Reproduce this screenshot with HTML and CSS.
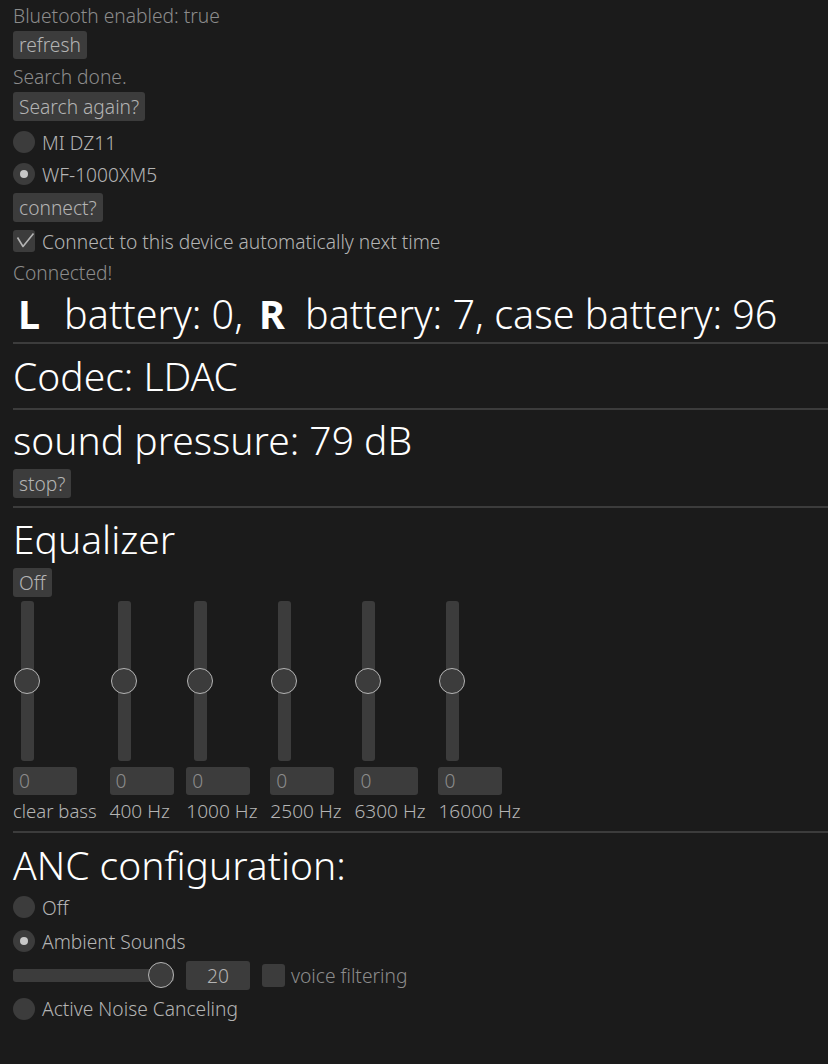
FILE: index.html
```html
<!DOCTYPE html>
<html>
<head>
<meta charset="utf-8">
<link rel="stylesheet" href="styles.css">
</head>
<body>
<div class="app">
  <div class="row h30"><span class="label">Bluetooth enabled: true</span></div>
  <button class="btn mt1 bh28">refresh</button>
  <div class="row h30 mt2"><span class="label">Search done.</span></div>
  <button class="btn mt1">Search again?</button>
  <div class="row h32 mt5"><span class="radio"></span><span class="wlabel">MI DZ11</span></div>
  <div class="row h32"><span class="radio on"><span class="dot"></span></span><span class="wlabel">WF-1000XM5</span></div>
  <button class="btn mt3">connect?</button>
  <div class="row h32 mt3">
    <span class="check"><svg width="22" height="22" viewBox="0 0 22 22"><polyline points="4.5,7.5 10,16.5 20.5,3.5" fill="none" stroke="#b4b4b4" stroke-width="1.6" stroke-linejoin="round"/></svg></span>
    <span class="wlabel">Connect to this device automatically next time</span>
  </div>
  <div class="row h30"><span class="label">Connected!</span></div>

  <div class="row h53 heading battery">
    <span class="strong sl">L</span><span class="b1">battery: 0,</span><span class="strong sr">R</span><span class="b2">battery: 7, case battery: 96</span>
  </div>
  <div class="sep mt2"></div>
  <div class="row h63 heading">Codec: LDAC</div>
  <div class="sep mt1"></div>
  <div class="row h59 heading">sound pressure: 79 dB</div>
  <button class="btn">stop?</button>
  <div class="sep mt8"></div>
  <div class="row h60 heading">Equalizer</div>
  <button class="btn">Off</button>

  <div class="eq">
    <div class="band">
      <div class="vslider"><div class="vtrack"></div><div class="knob vknob"></div></div>
      <div class="numbox">0</div>
      <div class="band-label">clear bass</div>
    </div>
    <div class="band">
      <div class="vslider"><div class="vtrack"></div><div class="knob vknob"></div></div>
      <div class="numbox">0</div>
      <div class="band-label hz">400 Hz</div>
    </div>
    <div class="band">
      <div class="vslider"><div class="vtrack"></div><div class="knob vknob"></div></div>
      <div class="numbox">0</div>
      <div class="band-label hz">1000 Hz</div>
    </div>
    <div class="band">
      <div class="vslider"><div class="vtrack"></div><div class="knob vknob"></div></div>
      <div class="numbox">0</div>
      <div class="band-label hz">2500 Hz</div>
    </div>
    <div class="band">
      <div class="vslider"><div class="vtrack"></div><div class="knob vknob"></div></div>
      <div class="numbox">0</div>
      <div class="band-label hz">6300 Hz</div>
    </div>
    <div class="band">
      <div class="vslider"><div class="vtrack"></div><div class="knob vknob"></div></div>
      <div class="numbox">0</div>
      <div class="band-label hz">16000 Hz</div>
    </div>
  </div>

  <div class="sep mt4"></div>
  <div class="row h57 heading anc">ANC configuration:</div>
  <div class="row h34"><span class="radio"></span><span class="wlabel">Off</span></div>
  <div class="row h34"><span class="radio on"><span class="dot"></span></span><span class="wlabel">Ambient Sounds</span></div>
  <div class="row h34">
    <div class="hslider"><div class="htrack"></div><div class="knob hknob"></div></div>
    <div class="dragval">20</div>
    <span class="check small"></span>
    <span class="label vf">voice filtering</span>
  </div>
  <div class="row h33"><span class="radio"></span><span class="wlabel">Active Noise Canceling</span></div>
</div>
</body>
</html>
```
FILE: styles.css
```css
html, body {
  margin: 0;
  background: #1b1b1b;
}
body {
  font-family: "Noto Sans", "Open Sans", sans-serif;
  font-weight: 300;
  font-size: 19.2px;
  color: #8c8c8c;
  width: 828px;
  height: 1064px;
  overflow: hidden;
}
.app {
  padding-left: 13px;
  display: flex;
  flex-direction: column;
  align-items: flex-start;
}
.row {
  display: flex;
  align-items: center;
  white-space: nowrap;
}
.h30 { height: 30px; }
.h32 { height: 32px; }
.h33 { height: 33px; }
.h34 { height: 34px; }
.h53 { height: 53px; }
.h57 { height: 57px; }
.h59 { height: 59px; }
.h60 { height: 60px; }
.h63 { height: 63px; }
.mt1 { margin-top: 1px; }
.mt2 { margin-top: 2px; }
.mt3 { margin-top: 3px; }
.mt4 { margin-top: 4px; }
.mt5 { margin-top: 5px; }
.mt8 { margin-top: 8px; }

.label { color: #8c8c8c; }
.wlabel { color: #b4b4b4; margin-left: 7px; }

.btn {
  font: inherit;
  border: none;
  background: #3c3c3c;
  color: #b4b4b4;
  height: 29px;
  padding: 0 6px;
  border-radius: 3px;
  line-height: 29px;
  white-space: nowrap;
}
.bh28 { height: 28px; line-height: 28px; }

.radio {
  width: 22px;
  height: 22px;
  border-radius: 50%;
  background: #3c3c3c;
  display: flex;
  align-items: center;
  justify-content: center;
  flex: none;
}
.dot {
  width: 8px;
  height: 8px;
  border-radius: 50%;
  background: #c8c8c8;
}
.check {
  width: 22px;
  height: 22px;
  border-radius: 3px;
  background: #3c3c3c;
  flex: none;
  display: block;
}
.check svg { display: block; }

.heading {
  font-size: 39px;
  color: #ffffff;
}
.battery { font-size: 39.5px; }
.strong { font-weight: 700; }
.sl { margin-left: 5px; }
.b1 { margin-left: 24px; }
.sr { margin-left: 16px; }
.b2 { margin-left: 20px; }
.anc { padding-top: 6px; box-sizing: border-box; }

.sep {
  width: 815px;
  height: 2px;
  background: #3c3c3c;
  flex: none;
}

.eq {
  display: flex;
  gap: 12.8px;
  margin-top: 4px;
}
.band {
  display: flex;
  flex-direction: column;
  align-items: flex-start;
  min-width: 64px;
}
.vslider {
  position: relative;
  width: 28px;
  height: 160px;
}
.vtrack {
  margin-left: 8px;
  width: 13px;
  height: 160px;
  border-radius: 3px;
  background: #3c3c3c;
}
.knob {
  position: absolute;
  width: 26px;
  height: 26px;
  box-sizing: border-box;
  border-radius: 50%;
  background: #3c3c3c;
  border: 1.5px solid #b4b4b4;
}
.vknob { left: 1px; top: 67px; }
.numbox {
  margin-top: 6px;
  width: 64px;
  height: 28px;
  line-height: 28px;
  box-sizing: border-box;
  padding-left: 6px;
  border-radius: 3px;
  background: #3c3c3c;
  color: #8c8c8c;
}
.band-label {
  height: 32px;
  line-height: 32px;
  font-size: 18.5px;
  white-space: nowrap;
  color: #b4b4b4;
}
.band-label.hz { font-size: 19.1px; }

.hslider {
  position: relative;
  width: 161px;
  height: 26px;
  display: flex;
  align-items: center;
}
.htrack {
  width: 161px;
  height: 13px;
  border-radius: 3px;
  background: #3c3c3c;
}
.hknob { left: 135px; top: 0; }
.dragval {
  margin-left: 12px;
  width: 64px;
  height: 29px;
  line-height: 29px;
  text-align: center;
  border-radius: 3px;
  background: #3c3c3c;
  color: #b4b4b4;
}
.check.small {
  margin-left: 12px;
  width: 23px;
  height: 23px;
}
.vf { margin-left: 6px; }
```
